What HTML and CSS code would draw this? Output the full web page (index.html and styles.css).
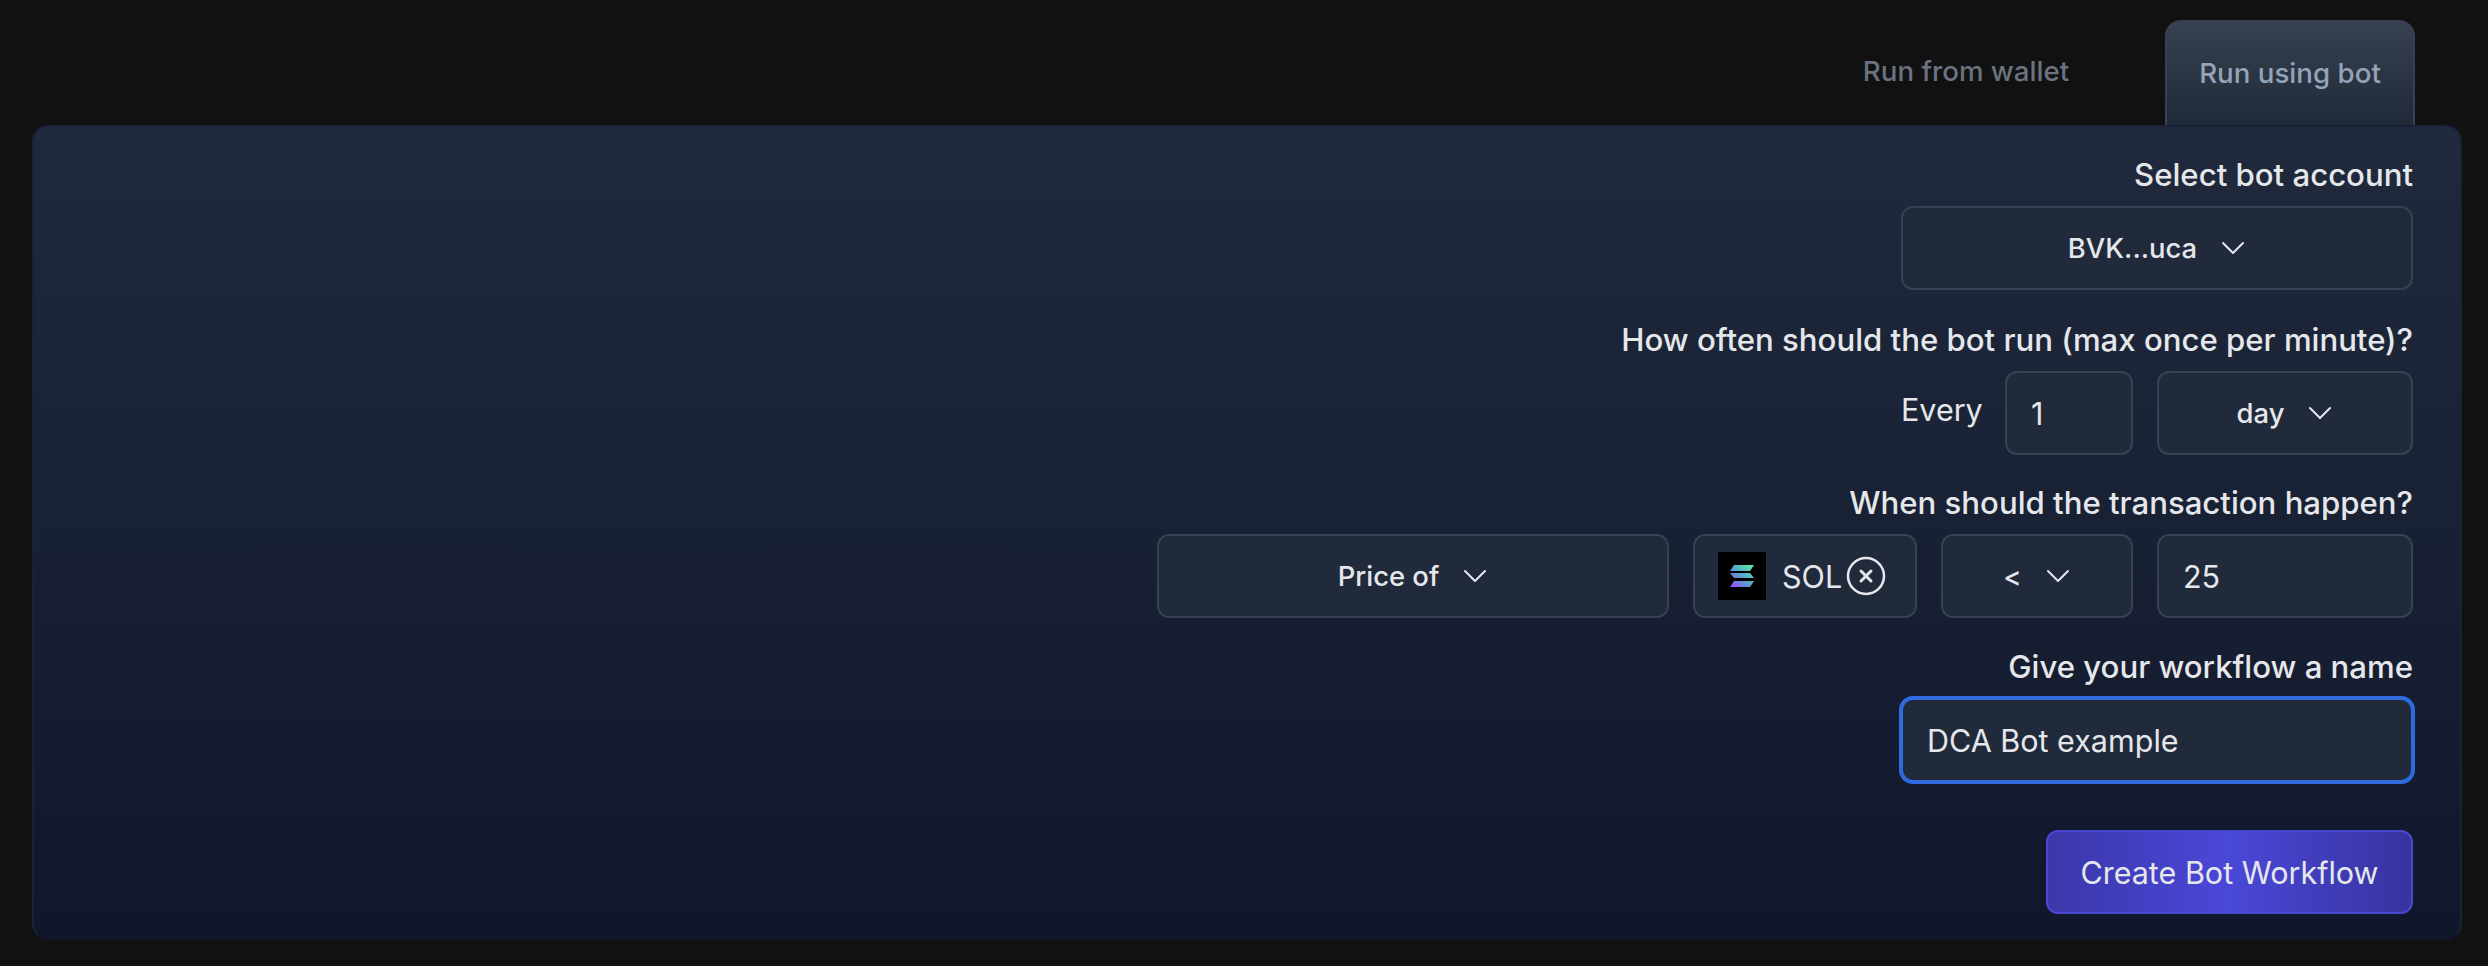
FILE: index.html
```html
<!DOCTYPE html>
<html lang="en">
<head>
    <meta charset="UTF-8">
    <meta name="viewport" content="width=device-width, initial-scale=1.0">
    <title>Create Bot Workflow</title>
    <link rel="stylesheet" href="styles.css">
</head>
<body>
    <div class="tabs">
        <button class="tab">Run from wallet</button>
        <button class="tab tab-active">Run using bot</button>
    </div>
    <form class="panel" action="">
        <div class="field-label first">Select bot account</div>
        <button type="button" class="box select wide">
            <span>BVK...uca</span>
            <svg class="chevron" viewBox="0 0 24 24"><path d="M19.5 8.25l-7.5 7.5-7.5-7.5"/></svg>
        </button>

        <div class="field-label often">How often should the bot run (max once per minute)?</div>
        <div class="row">
            <span class="every">Every</span>
            <input class="box text num" type="text" value="1">
            <button type="button" class="box select mid">
                <span>day</span>
                <svg class="chevron" viewBox="0 0 24 24"><path d="M19.5 8.25l-7.5 7.5-7.5-7.5"/></svg>
            </button>
        </div>

        <div class="field-label when">When should the transaction happen?</div>
        <div class="row">
            <button type="button" class="box select wide">
                <span>Price of</span>
                <svg class="chevron" viewBox="0 0 24 24"><path d="M19.5 8.25l-7.5 7.5-7.5-7.5"/></svg>
            </button>
            <div class="box token">
                <svg class="token-logo" viewBox="0 0 48 48">
                    <defs>
                        <linearGradient id="sol" x1="1" y1="0" x2="0" y2="1">
                            <stop offset="0" stop-color="#5cf0a0"/>
                            <stop offset="0.5" stop-color="#58a6c8"/>
                            <stop offset="1" stop-color="#9945ff"/>
                        </linearGradient>
                    </defs>
                    <rect width="48" height="48" fill="#000"/>
                    <path fill="url(#sol)" d="M16 13h20l-4 6H12zM12 21h20l4 5H16zM16 29h20l-4 6H12z"/>
                </svg>
                <span class="token-name">SOL</span>
                <svg class="token-close" viewBox="0 0 40 40">
                    <circle cx="20" cy="20" r="18"/>
                    <path d="M15 15l10 10M25 15l-10 10"/>
                </svg>
            </div>
            <button type="button" class="box select mini">
                <span>&lt;</span>
                <svg class="chevron" viewBox="0 0 24 24"><path d="M19.5 8.25l-7.5 7.5-7.5-7.5"/></svg>
            </button>
            <input class="box text mid" type="text" value="25">
        </div>

        <div class="field-label name">Give your workflow a name</div>
        <input class="box text wide focused" type="text" value="DCA Bot example">

        <button type="button" class="create">Create Bot Workflow</button>
    </form>
</body>
</html>
```

FILE: styles.css
```css
*{
    box-sizing: border-box;
    font-family: "Inter", "Liberation Sans", sans-serif;
}
body{
    margin: 0;
    height: 966px;
    padding: 20px 26px 0 32px;
    background: #111111;
    color: #e5e7eb;
    overflow: hidden;
}

/* tabs */
.tabs{
    display: flex;
    justify-content: flex-end;
    height: 105px;
    padding-right: 47px;
}
.tab{
    width: 250px;
    margin-left: 74px;
    padding: 0 0 4px;
    font-size: 27.7px;
    font-weight: 500;
    color: #6b7280;
    background: none;
    border: 0;
}
.tab-active{
    padding: 0 0 2px;
    color: #94a3b8;
    background: linear-gradient(#374151, #1f2937);
    border: 2px solid #374151;
    border-bottom: 0;
    border-radius: 16px 16px 0 0;
}

/* panel */
.panel{
    display: flex;
    flex-direction: column;
    align-items: flex-end;
    height: 815px;
    padding: 28px 47px 24px 0;
    background: linear-gradient(#202a3c, #11172b);
    border: 2px solid #1a2238;
    border-bottom-color: #11172b;
    border-radius: 16px;
}
.field-label{
    height: 40px;
    margin: 0 0 11px;
    font-size: 31.15px;
    font-weight: 500;
    line-height: 40px;
    text-align: right;
}
.often{ margin: 30px 0 11px; }
.when{ margin: 28px 0 11px; }
.name{ margin: 29px 0 11px; }
.row{
    display: flex;
    align-items: center;
    gap: 24px;
}

/* controls */
.box{
    height: 84px;
    color: #e5e7eb;
    background: #202a3b;
    border: 2px solid #364152;
    border-radius: 12px;
}
.select{
    display: flex;
    align-items: center;
    justify-content: center;
    gap: 20px;
    padding: 0 0 0 3px;
    font-size: 27.4px;
    font-weight: 500;
}
.chevron{
    width: 32px;
    height: 32px;
    fill: none;
    stroke: #e5e7eb;
    stroke-width: 1.5;
    stroke-linecap: round;
    stroke-linejoin: round;
}
.text{
    padding: 0 24px;
    font-size: 30.5px;
    outline: none;
}
.wide{ width: 512px; }
.mid{ width: 256px; }
.num{ width: 128px; }
.mini{ width: 192px; }
.every{
    width: 80px;
    padding-bottom: 8px;
    font-size: 30.5px;
}
.token{
    display: flex;
    align-items: center;
    width: 224px;
    padding-left: 23px;
}
.token-logo{
    width: 48px;
    height: 48px;
    flex: none;
}
.token-name{
    margin-left: 16px;
    font-size: 30.5px;
}
.token-close{
    width: 40px;
    height: 40px;
    margin-left: 4px;
    flex: none;
    fill: none;
    stroke: #e5e7eb;
    stroke-width: 2.5;
    stroke-linecap: round;
}
.token-close path{
    stroke-width: 3;
}
.focused{
    border-color: #2f6bde;
    box-shadow: 0 0 0 2px #2f6bde;
}
.create{
    width: 367px;
    height: 84px;
    margin-top: 48px;
    font-size: 30.5px;
    color: #e5e7eb;
    background: linear-gradient(90deg, #3b37aa 0%, #4a48d8 50%, #37339f 100%);
    border: 2px solid #4a47d0;
    border-radius: 12px;
}
```
